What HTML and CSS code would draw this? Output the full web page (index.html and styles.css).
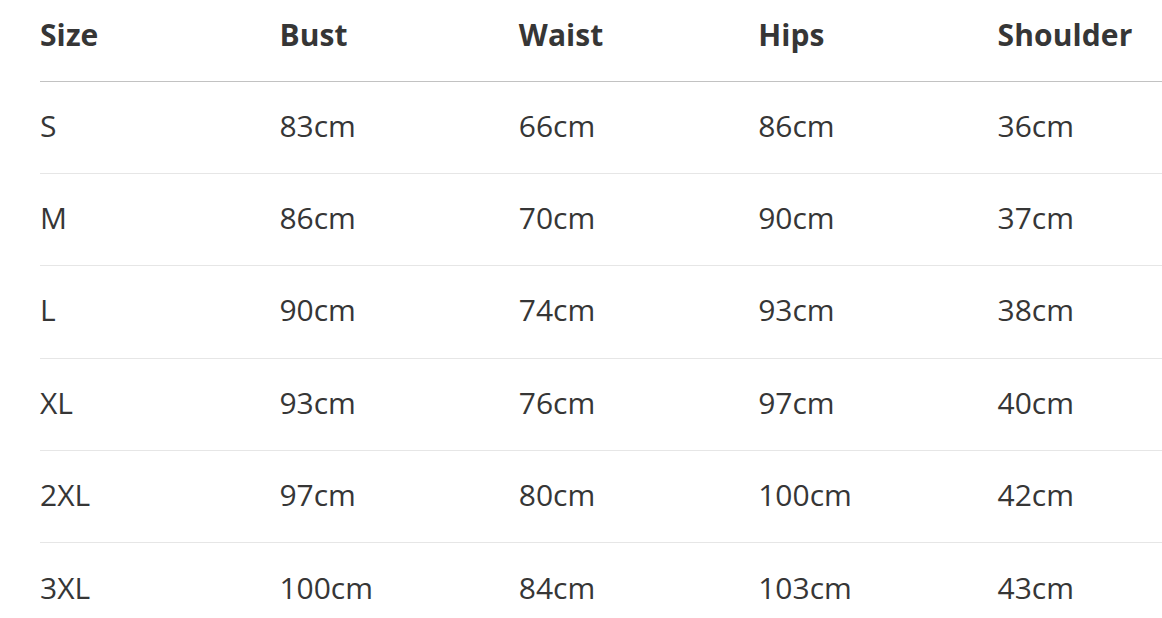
FILE: index.html
```html
<!DOCTYPE html>
<html lang="en">
<head>
<meta charset="utf-8">
<title>Size Chart</title>
<link rel="stylesheet" href="styles.css">
</head>
<body>
<div class="wrap">
<table class="size-table">
<thead>
<tr><th>Size</th><th>Bust</th><th>Waist</th><th>Hips</th><th>Shoulder</th></tr>
</thead>
<tbody>
<tr><td>S</td><td>83cm</td><td>66cm</td><td>86cm</td><td>36cm</td></tr>
<tr><td>M</td><td>86cm</td><td>70cm</td><td>90cm</td><td>37cm</td></tr>
<tr><td>L</td><td>90cm</td><td>74cm</td><td>93cm</td><td>38cm</td></tr>
<tr><td>XL</td><td>93cm</td><td>76cm</td><td>97cm</td><td>40cm</td></tr>
<tr><td>2XL</td><td>97cm</td><td>80cm</td><td>100cm</td><td>42cm</td></tr>
<tr><td>3XL</td><td>100cm</td><td>84cm</td><td>103cm</td><td>43cm</td></tr>
</tbody>
</table>
</div>
</body>
</html>
```
FILE: styles.css
```css
html, body {
  margin: 0;
  padding: 0;
  background: #ffffff;
  overflow: hidden;
}
.wrap {
  padding-left: 40px;
  width: 1240px;
}
.size-table {
  border-collapse: collapse;
  table-layout: fixed;
  width: 1197px;
  font-family: "Open Sans", "Noto Sans", sans-serif;
  color: #363636;
  font-size: 30px;
}
.size-table th,
.size-table td {
  text-align: left;
  padding: 0;
  width: 239.4px;
  vertical-align: middle;
}
.size-table th {
  font-weight: 700;
  height: 81px;
  padding-bottom: 11px;
  box-sizing: border-box;
  border-bottom: 1px solid #c2c2c2;
  letter-spacing: 0.1px;
}
.size-table td {
  height: 92.4px;
  padding-bottom: 4px;
  box-sizing: border-box;
  border-bottom: 1px solid #e6e6e6;
  font-weight: 400;
  letter-spacing: 0;
}
```
